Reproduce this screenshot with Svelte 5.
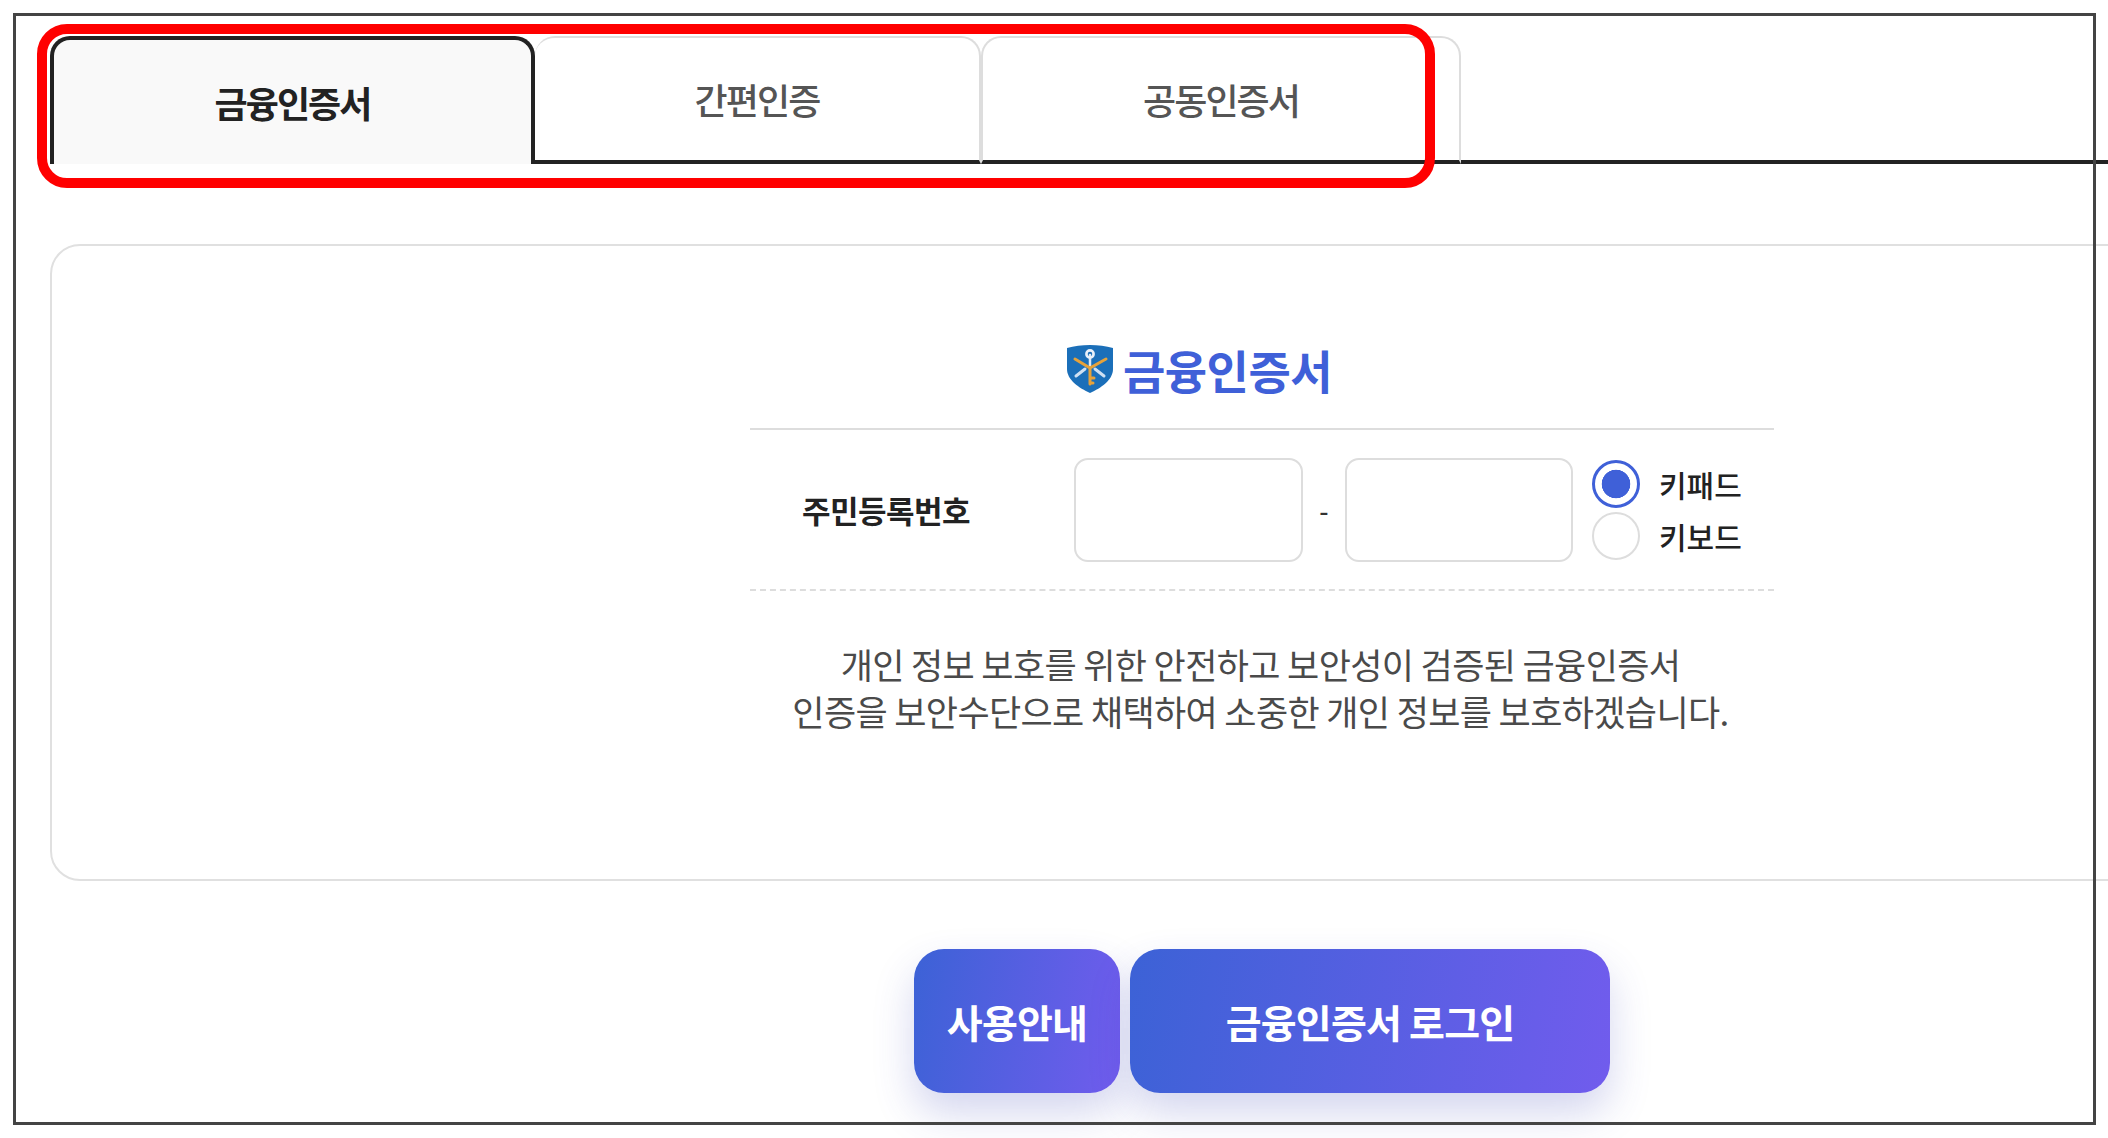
<script>
  const tabs = [
    { label: '금융인증서', width: 485, active: true },
    { label: '간편인증', width: 446 },
    { label: '공동인증서', width: 480 }
  ];
</script>

<div class="page">
  <div class="tabs">
    {#each tabs as tab}
      <button class="tab" class:active={tab.active} style="width: {tab.width}px">
        <span>{tab.label}</span>
      </button>
    {/each}
    <div class="tab-rest"></div>
  </div>

  <section class="panel">
    <div class="form">
      <h2 class="heading">
        <svg class="logo" viewBox="0 0 46 48" aria-hidden="true">
          <path d="M0 3 C14 -1 32 -1 46 3 V24 C46 35 34 43 23 48 C12 43 0 35 0 24 Z" fill="#1b6fb9" />
          <g stroke-linecap="round" fill="none">
            <path d="M9 31 L18 24 M37 31 L28 24" stroke="#cfe0f2" stroke-width="3" />
            <path d="M23 10 V22" stroke="#dce9f6" stroke-width="2.5" />
            <circle cx="23" cy="9" r="3.6" stroke="#e8f0f9" stroke-width="2.6" />
            <path d="M8 14 L23 23 L39 14 M23 23 V39 M23 33 H27 M23 38 H26" stroke="#e6a23a" stroke-width="3" />
          </g>
        </svg>
        <span>금융인증서</span>
      </h2>

      <div class="row">
        <div class="label">주민등록번호</div>
        <input class="field first" type="text" aria-label="주민등록번호 앞자리" />
        <span class="hyphen">-</span>
        <input class="field" type="password" aria-label="주민등록번호 뒷자리" />
        <div class="radios">
          <label class="radio"><span class="dot on"></span><span>키패드</span></label>
          <label class="radio"><span class="dot"></span><span>키보드</span></label>
        </div>
      </div>

      <p class="desc">
        개인 정보 보호를 위한 안전하고 보안성이 검증된 금융인증서<br />
        인증을 보안수단으로 채택하여 소중한 개인 정보를 보호하겠습니다.
      </p>
    </div>
  </section>

  <div class="actions">
    <button class="cta guide">사용안내</button>
    <button class="cta login">금융인증서 로그인</button>
  </div>
</div>

<div class="frame"></div>
<div class="highlight"></div>

<style>
  :global(html), :global(body) {
    margin: 0;
    height: 1138px;
    overflow: hidden;
    background: #fff;
  }

  .page {
    box-sizing: border-box;
    width: 2474px;
    height: 1138px;
    padding: 36px 0 0 50px;
    font-family: "Noto Sans CJK KR", "Noto Sans", sans-serif;
    color: #222;
    overflow: hidden;
  }

  .tabs {
    display: flex;
    height: 128px;
  }

  .tab {
    box-sizing: border-box;
    height: 128px;
    padding: 0;
    background: #fff;
    border: 2px solid #ddd;
    border-left-width: 0;
    border-bottom: 4px solid #222;
    border-radius: 20px 20px 0 0;
    font: inherit;
    font-size: 36px;
    font-weight: 500;
    letter-spacing: -1.9px;
    color: #555;
    display: flex;
    align-items: center;
    justify-content: center;
  }

  .tab:nth-child(3) {
    border-left: 2px solid #ddd;
  }

  .tab.active {
    background: #f9f9f9;
    border: 4px solid #222;
    border-bottom: 0;
    font-weight: 700;
    color: #222;
  }

  .tab-rest {
    flex: 1;
    border-bottom: 4px solid #222;
  }

  .panel {
    box-sizing: border-box;
    width: 2424px;
    height: 637px;
    margin-top: 80px;
    border: 2px solid #e0e0e0;
    border-radius: 30px;
    padding-top: 88px;
    background: #fff;
  }

  .form {
    width: 1024px;
    margin: 0 auto;
  }

  .heading {
    display: flex;
    align-items: center;
    justify-content: center;
    gap: 10px;
    height: 70px;
    margin: 0;
    padding: 0 125px 24px 0;
    border-bottom: 2px solid #ddd;
    font-size: 46px;
    font-weight: 700;
    letter-spacing: -0.5px;
    color: #3f60d8;
  }

  .logo {
    width: 46px;
    height: 48px;
    flex: none;
  }

  .row {
    display: flex;
    align-items: center;
    height: 159px;
    border-bottom: 2px dashed #ddd;
  }

  .label {
    width: 272px;
    padding-left: 52px;
    font-size: 31px;
    font-weight: 700;
    letter-spacing: -0.5px;
    color: #222;
  }

  .field {
    box-sizing: border-box;
    width: 228px;
    height: 104px;
    border: 2px solid #ddd;
    border-radius: 14px;
    background: #fff;
    outline: none;
  }

  .field.first {
    width: 229px;
  }

  .hyphen {
    width: 42px;
    text-align: center;
    font-size: 26px;
    font-weight: 500;
    color: #333;
  }

  .radios {
    display: flex;
    flex-direction: column;
    gap: 4px;
    margin-left: 19px;
  }

  .radio {
    display: flex;
    align-items: center;
    gap: 19px;
    height: 48px;
    font-size: 30px;
    font-weight: 500;
    color: #222;
  }

  .dot {
    box-sizing: border-box;
    width: 48px;
    height: 48px;
    border-radius: 50%;
    border: 2px solid #ddd;
    background: #fff;
    flex: none;
  }

  .dot.on {
    border: 3px solid #3f60d8;
    background: radial-gradient(circle, #3f60d8 14px, #fff 14.6px);
  }

  .desc {
    margin: 49px 0 0;
    padding-right: 3px;
    text-align: center;
    font-size: 35px;
    line-height: 47px;
    letter-spacing: -0.63px;
    color: #4a4a4a;
  }

  .actions {
    display: flex;
    justify-content: center;
    gap: 10px;
    width: 2424px;
    margin-top: 68px;
  }

  .cta {
    height: 144px;
    padding: 0;
    border: 0;
    border-radius: 30px;
    background: linear-gradient(100deg, #3c62d6 0%, #715ced 100%);
    box-shadow: 0 20px 40px rgba(60, 70, 180, 0.22);
    font: inherit;
    font-size: 39px;
    font-weight: 700;
    letter-spacing: -0.8px;
    color: #fff;
  }

  .guide { width: 206px; }
  .login { width: 480px; }

  .frame {
    position: absolute;
    box-sizing: border-box;
    left: 13px;
    top: 13px;
    width: 2083px;
    height: 1112px;
    border: 3px solid #444;
    pointer-events: none;
  }

  .highlight {
    position: absolute;
    box-sizing: border-box;
    left: 37px;
    top: 24px;
    width: 1398px;
    height: 164px;
    border: 10px solid #f00;
    border-radius: 30px;
    pointer-events: none;
  }
</style>
